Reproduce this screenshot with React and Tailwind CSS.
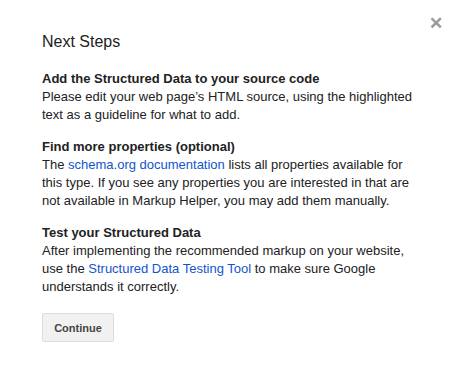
import React from "react";

const Section = ({ title, children }) => (
  <div className="mt-[14px] first:mt-0">
    <div className="font-bold text-[#222]">{title}</div>
    <p>{children}</p>
  </div>
);

const App = () => {
  return (
    <div className="relative h-[373px] w-[459px] bg-white font-['Liberation_Sans',Arial,sans-serif] text-[13px] leading-[18px] text-[#222]">
      <button className="absolute right-[16px] top-[15px] text-[#999] text-[17px] leading-none font-bold">
        ✕
      </button>
      <div className="pl-[42px] pt-[32px] w-[420px]">
        <h1 className="text-[16px] leading-[20px] text-[#222]">Next Steps</h1>
        <div className="mt-[18px]">
          <Section title="Add the Structured Data to your source code">
            Please edit your web page’s HTML source, using the highlighted text as a guideline for what to add.
          </Section>
          <Section title="Find more properties (optional)">
            The <a className="text-[#15c]">schema.org documentation</a> lists all properties available for this type. If you see any properties you are interested in that are not available in Markup Helper, you may add them manually.
          </Section>
          <Section title="Test your Structured Data">
            After implementing the recommended markup on your website, use the <a className="text-[#15c]">Structured Data Testing Tool</a> to make sure Google understands it correctly.
          </Section>
        </div>
        <button className="mt-[17px] h-[29px] w-[72px] rounded-[2px] border border-[#dcdcdc] bg-[#f1f1f1] text-[11px] font-bold text-[#444]">
          Continue
        </button>
      </div>
    </div>
  );
};

export default App;
